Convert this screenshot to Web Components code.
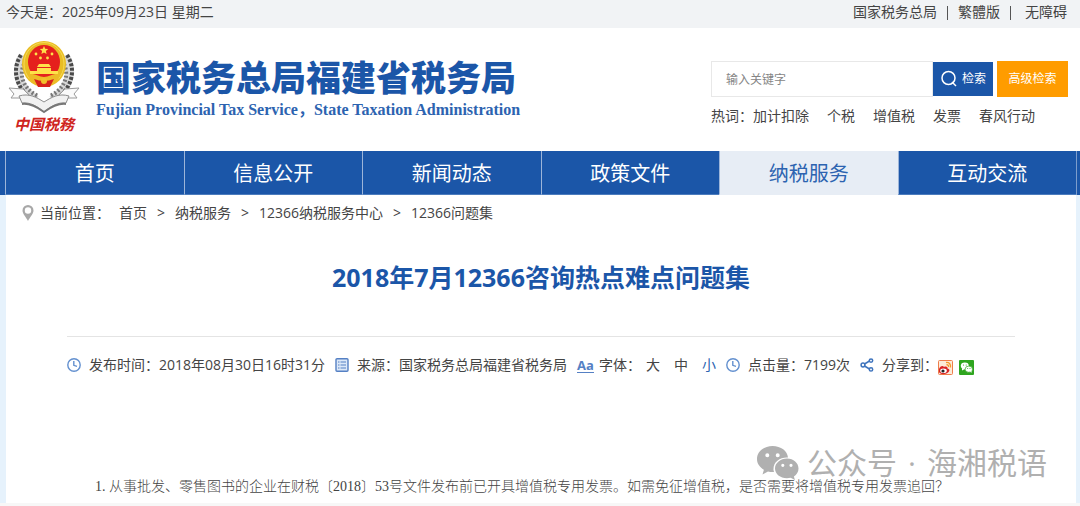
<!DOCTYPE html>
<html lang="zh-CN">
<head>
<meta charset="utf-8">
<title>2018年7月12366咨询热点难点问题集</title>
<style>
html { background: #f7f7f7; }
body { margin: 0; font: 14px/20px "Open Sans", "Noto Sans CJK SC", sans-serif; color: #444; }
</style>
</head>
<body>
<tax-page></tax-page>

<script>
const define = (name, html) => {
  const template = document.createElement('template');
  template.innerHTML = html;
  customElements.define(name, class extends HTMLElement {
    constructor() {
      super();
      this.attachShadow({ mode: 'open' }).append(template.content.cloneNode(true));
    }
  });
};

define('top-bar', `
<style>
:host { display: flex; justify-content: space-between; height: 28px; padding: 0 13px 0 6px; background: #f1f3f5; line-height: 24px; }
nav { display: flex; gap: 10px; }
a { color: inherit; text-decoration: none; }
i { width: 1px; height: 14px; margin-top: 6px; background: #555; }
a:last-child { margin-left: 4px; }
</style>
<span>今天是：2025年09月23日 星期二</span>
<nav><a href="#">国家税务总局</a><i></i><a href="#">繁體版</a><i></i><a href="#">无障碍</a></nav>`);

define('tax-emblem', `
<style>
:host { display: flex; flex-direction: column; align-items: center; width: 72px; }
svg { display: block; }
span { font: italic 700 15px/20px "Noto Sans CJK SC", sans-serif; color: #cf2420; }
</style>
<svg width="72" height="74" viewBox="0 0 72 74">
  <g fill="none" stroke="#d8d8d8" stroke-width="9">
    <path d="M15 16C6 30 10 48 28 60"/><path d="M57 16c9 14 5 32-13 44"/>
  </g>
  <g fill="none" stroke="#4a4a4a" stroke-width="4" stroke-dasharray="3 1.6">
    <path d="M13 15C3 30 8 50 27 61"/><path d="M59 15c10 15 5 35-14 46"/>
  </g>
  <g fill="none" stroke="#777" stroke-width="4" stroke-dasharray="2 2">
    <path d="M16 24C10 37 17 50 30 56"/><path d="M56 24c6 13-1 26-14 32"/>
  </g>
  <ellipse cx="36" cy="24" rx="22" ry="23" fill="#e9bd25"/>
  <ellipse cx="36" cy="24" rx="20" ry="21.5" fill="none" stroke="#f6da54" stroke-width="1"/>
  <ellipse cx="36" cy="22" rx="16" ry="17" fill="#e5201d"/>
  <path d="M36 6l1.2 2.800 3 .2-2.300 2 .7 3-2.600-1.600-2.600 1.600.7-3-2.300-2 3-.2z" fill="#ffe14a"/>
  <g fill="#ffe14a"><circle cx="28" cy="14" r="1.400"/><circle cx="44" cy="14" r="1.400"/><circle cx="32.500" cy="18" r="1.400"/><circle cx="39.500" cy="18" r="1.400"/>
  <path d="M31 24h10l2 3H29zM29 28h14v3h7v3H22v-3h7z"/></g>
  <path d="M20 35c6-3 10 2 16 2s10-5 16-2c-2 8-8 11-16 11s-14-3-16-11z" fill="#edbb27"/>
  <path d="M26 39c4 1 6 2 10 2s6-1 10-2l-4 8H30z" fill="#d8231c"/><circle cx="36" cy="41" r="3" fill="#f1c12b"/>
  <path d="M1 48l14 1 6 6-3 3H3l3-4zM71 48l-14 1-6 6 3 3h15l-3-4z" fill="#fafafa" stroke="#9a9a9a"/>
  <path d="M11 56c10-3 17 1 25 6 8-5 15-9 25-6l-3 7c-8-1-15 3-22 9-7-6-14-10-22-9z" fill="#f1f1f1" stroke="#8d8d8d"/>
  <path d="M14 64c8-1 15 3 22 8 7-5 14-9 22-8" fill="none" stroke="#777" stroke-width="2"/>
</svg>
<span>中国税務</span>`);

define('search-box', `
<style>
:host { display: block; width: 357px; }
form { display: flex; align-items: center; }
input { flex: 1; min-width: 0; height: 36px; box-sizing: border-box; border: 1px solid #e8e8e8; padding: 0 14px; background: #fff; font: inherit; font-size: 12px; color: #444; outline: 0; }
input::placeholder { color: #858585; opacity: 1; }
button { display: flex; align-items: center; justify-content: center; gap: 4px; border: 0; padding: 0; font: inherit; font-size: 12px; color: #fff; }
.go { width: 60px; height: 34px; background: #1b56a8; }
.more { width: 71px; height: 36px; margin-left: 4px; background: #ff9c00; }
.hot { display: flex; gap: 18px; margin-top: 9px; }
a { color: inherit; text-decoration: none; }
</style>
<form onsubmit="return false">
  <input type="text" placeholder="输入关键字" aria-label="输入关键字">
  <button class="go"><svg width="18" height="18" viewBox="0 0 18 18" fill="none" stroke="#fff" stroke-width="1.500"><circle cx="8.500" cy="8" r="6.500"/><path d="M12 12l4 4"/></svg>检索</button>
  <button class="more" type="button">高级检索</button>
</form>
<div class="hot"><span>热词：<a href="#">加计扣除</a></span><a href="#">个税</a><a href="#">增值税</a><a href="#">发票</a><a href="#">春风行动</a></div>`);

define('site-header', `
<style>
:host { display: flex; justify-content: space-between; align-items: flex-start; height: 123px; box-sizing: border-box; padding: 12px 12px 0 8px; background: #fff; }
.brand { display: flex; gap: 16px; color: #1b56a8; }
.name { padding-top: 14px; white-space: nowrap; }
strong { display: block; font: 900 35px/44px "Noto Sans CJK SC", sans-serif; }
em { display: block; font: normal 700 16px/24px "Liberation Serif", "Noto Sans CJK SC", serif; color: #2c63b0; }
search-box { margin-top: 21px; }
</style>
<div class="brand"><tax-emblem></tax-emblem>
<div class="name"><strong>国家税务总局福建省税务局</strong><em>Fujian Provincial Tax Service，State Taxation Administration</em></div></div>
<search-box></search-box>`);

define('main-nav', `
<style>
:host { display: block; padding: 0 3px 0 5px; background: #1b56a8; }
nav { display: grid; grid-template-columns: repeat(6, 1fr); border-right: 1px solid #7d9dcc; }
a { border-left: 1px solid #9db5d9; border-bottom: 1px solid #4c7cbd; padding-top: 3px; color: #fff; font-size: 20px; line-height: 40px; text-align: center; text-decoration: none; }
a.on { background: #e7edf5; border-bottom-color: #e7edf5; color: #2c63b0; }
</style>
<nav><a href="#">首页</a><a href="#">信息公开</a><a href="#">新闻动态</a><a href="#">政策文件</a><a href="#" class="on">纳税服务</a><a href="#">互动交流</a></nav>`);

define('bread-crumb', `
<style>
:host { display: flex; align-items: center; height: 36px; padding-left: 16px; }
svg { margin-right: 6px; }
nav { display: flex; gap: 10px; margin-left: 9px; }
a { color: inherit; text-decoration: none; }
</style>
<svg width="12" height="16" viewBox="0 0 12 16"><path fill="#a8a8a8" fill-rule="evenodd" d="M6 0a5.500 5.500 0 0 1 5.500 5.500C11.500 9 8 12 6 16 4 12 .5 9 .5 5.500A5.500 5.500 0 0 1 6 0zm0 2.300a3.200 3.200 0 1 0 0 6.400 3.200 3.200 0 0 0 0-6.400z"/></svg>
<span>当前位置：</span>
<nav><a href="#">首页</a><span>&gt;</span><a href="#">纳税服务</a><span>&gt;</span><a href="#">12366纳税服务中心</a><span>&gt;</span><a href="#">12366问题集</a></nav>`);

const clock = '<svg width="14" height="14" viewBox="0 0 14 14" fill="none" stroke="#6390cf" stroke-width="1.400"><circle cx="7" cy="7" r="6.200"/><path d="M6.800 3v4.300l3.200 1"/></svg>';

define('article-meta', `
<style>
:host { display: flex; align-items: center; gap: 10px; white-space: nowrap; }
div { display: flex; align-items: center; gap: 8px; }
svg { flex: none; display: block; }
.font { gap: 5px; }
b { font: 700 13px/14px "Open Sans", sans-serif; color: #5580c4; border-bottom: 1px solid #5580c4; }
.sizes { gap: 14px; }
button { border: 0; padding: 0; background: none; font: inherit; color: inherit; }
button.on { color: #2c63b0; }
.share { gap: 0; }
.share > svg { margin-right: 8px; }
.links { gap: 6px; margin-top: 4px; }
</style>
<div>${clock}<span>发布时间：2018年08月30日16时31分</span></div>
<div><svg width="14" height="14" viewBox="0 0 14 14"><rect x="1" y=".7" width="12" height="12.600" rx="1" fill="#dce8f8" stroke="#5580c4" stroke-width="1.400"/><path d="M3 4h1.500M5.500 4H11M3 7h1.500M5.500 7H11M3 10h1.500M5.500 10H11" stroke="#5580c4" stroke-width="1.200"/></svg><span>来源：国家税务总局福建省税务局</span></div>
<div class="font"><b>Aa</b><span>字体：</span><div class="sizes"><button>大</button><button>中</button><button class="on">小</button></div></div>
<div>${clock}<span>点击量：7199次</span></div>
<div class="share"><svg width="14" height="14" viewBox="0 0 14 14" fill="none" stroke="#3f74bd" stroke-width="1.500"><path d="M4.500 6l5-3M4.500 8l5 3"/><circle cx="3" cy="7" r="1.900"/><circle cx="11" cy="2.600" r="1.700"/><circle cx="11" cy="11.400" r="1.700"/></svg><span>分享到：</span>
<div class="links"><a href="#" aria-label="新浪微博"><svg width="15" height="15" viewBox="0 0 15 15"><rect x=".5" y=".5" width="14" height="14" rx="1" fill="#fdebd9" stroke="#ee7d4c"/><path d="M1 9c1-3 4-4 5-2 2-1 4 0 3.500 1.500C12 9 12 11 10 12.500 7 15 2 14.500 1 12z" fill="#d92525"/><ellipse cx="5.500" cy="10.800" rx="3.300" ry="2.300" fill="#fff"/><circle cx="5" cy="11" r="1.600" fill="#222"/><path d="M8 2.500c3-.5 5 1.500 4.500 5M8.500 4.800c1.500-.2 2.300.8 2 2.200" fill="none" stroke="#f59a2c" stroke-width="1.300"/></svg></a>
<a href="#" aria-label="微信"><svg width="15" height="15" viewBox="0 0 15 15"><rect width="15" height="15" rx="1" fill="#2fa51f"/><ellipse cx="5.800" cy="5.800" rx="4" ry="3.400" fill="#fff"/><path d="M3 8l0 2.500L6 9z" fill="#fff"/><ellipse cx="9.800" cy="9.200" rx="3.700" ry="3.100" fill="#fff" stroke="#2fa51f" stroke-width=".7"/><path d="M11 11l1.500 2 0-3z" fill="#fff"/><g fill="#2fa51f"><circle cx="4.500" cy="5" r=".6"/><circle cx="7.200" cy="5" r=".6"/><circle cx="8.700" cy="8.600" r=".5"/><circle cx="11" cy="8.600" r=".5"/></g></svg></a></div></div>`);

define('account-mark', `
<style>
:host { display: flex; align-items: center; gap: 8px; color: #b0b0b0; font-size: 30px; line-height: 30px; font-weight: 400; white-space: nowrap; }
span { display: flex; gap: 11px; }
</style>
<svg width="42" height="34" viewBox="0 0 42 34" fill="#b0b0b0"><path fill-rule="evenodd" d="M15.500 0C24 0 30.500 5 31 11.500 23 11 16 16 16.500 24l.5 2c-2 .2-4 0-6-.6L5.500 28.500l1.400-4.800C2.500 21 0 17.500 0 13 0 5.500 7 0 15.500 0zm-5.200 7.200a2 2 0 1 0 0 4 2 2 0 0 0 0-4zm10.400 0a2 2 0 1 0 0 4 2 2 0 0 0 0-4z"/><path fill-rule="evenodd" d="M30 12.500c6.500 0 11.500 4.500 11.500 10 0 3.300-1.800 6.200-4.600 8l1 3.500-4.200-2.200c-8.500 2-15.700-3-15.700-9.300 0-5.500 5.500-10 12-10zm-4.200 5.200a1.600 1.600 0 1 0 0 3.200 1.600 1.600 0 0 0 0-3.200zm8.200 0a1.600 1.600 0 1 0 0 3.200 1.600 1.600 0 0 0 0-3.200z"/></svg>
<span><span>公众号</span><span>·</span><span>海湘税语</span></span>`);

define('article-view', `
<style>
:host { display: block; padding: 0 61px; }
h1 { margin: 0; padding: 28px 0 41px; font-size: 25px; line-height: 36px; font-weight: 700; color: #1b56a8; text-align: center; border-bottom: 1px solid #e4e4e4; }
article-meta { margin-top: 18px; }
p { margin: 102px 0 0; padding: 0 0 6px 28px; font: 300 14px/20px "Liberation Serif", "Noto Sans CJK SC", serif; color: #444; }
</style>
<h1><slot name="title"></slot></h1>
<article-meta></article-meta>
<p><slot></slot></p>`);

define('tax-page', `
<style>
:host { display: block; }
.side { padding: 0 4px 0 6px; background: #e6f2fc; }
main { position: relative; background: #fff; }
account-mark { position: absolute; right: 29px; bottom: 23px; }
</style>
<top-bar></top-bar>
<site-header></site-header>
<main-nav></main-nav>
<div class="side"><main>
<bread-crumb></bread-crumb>
<article-view><span slot="title">2018年7月12366咨询热点难点问题集</span>1. 从事批发、零售图书的企业在财税〔2018〕53号文件发布前已开具增值税专用发票。如需免征增值税，是否需要将增值税专用发票追回？</article-view>
<account-mark></account-mark>
</main></div>`);
</script>
</body>
</html>
